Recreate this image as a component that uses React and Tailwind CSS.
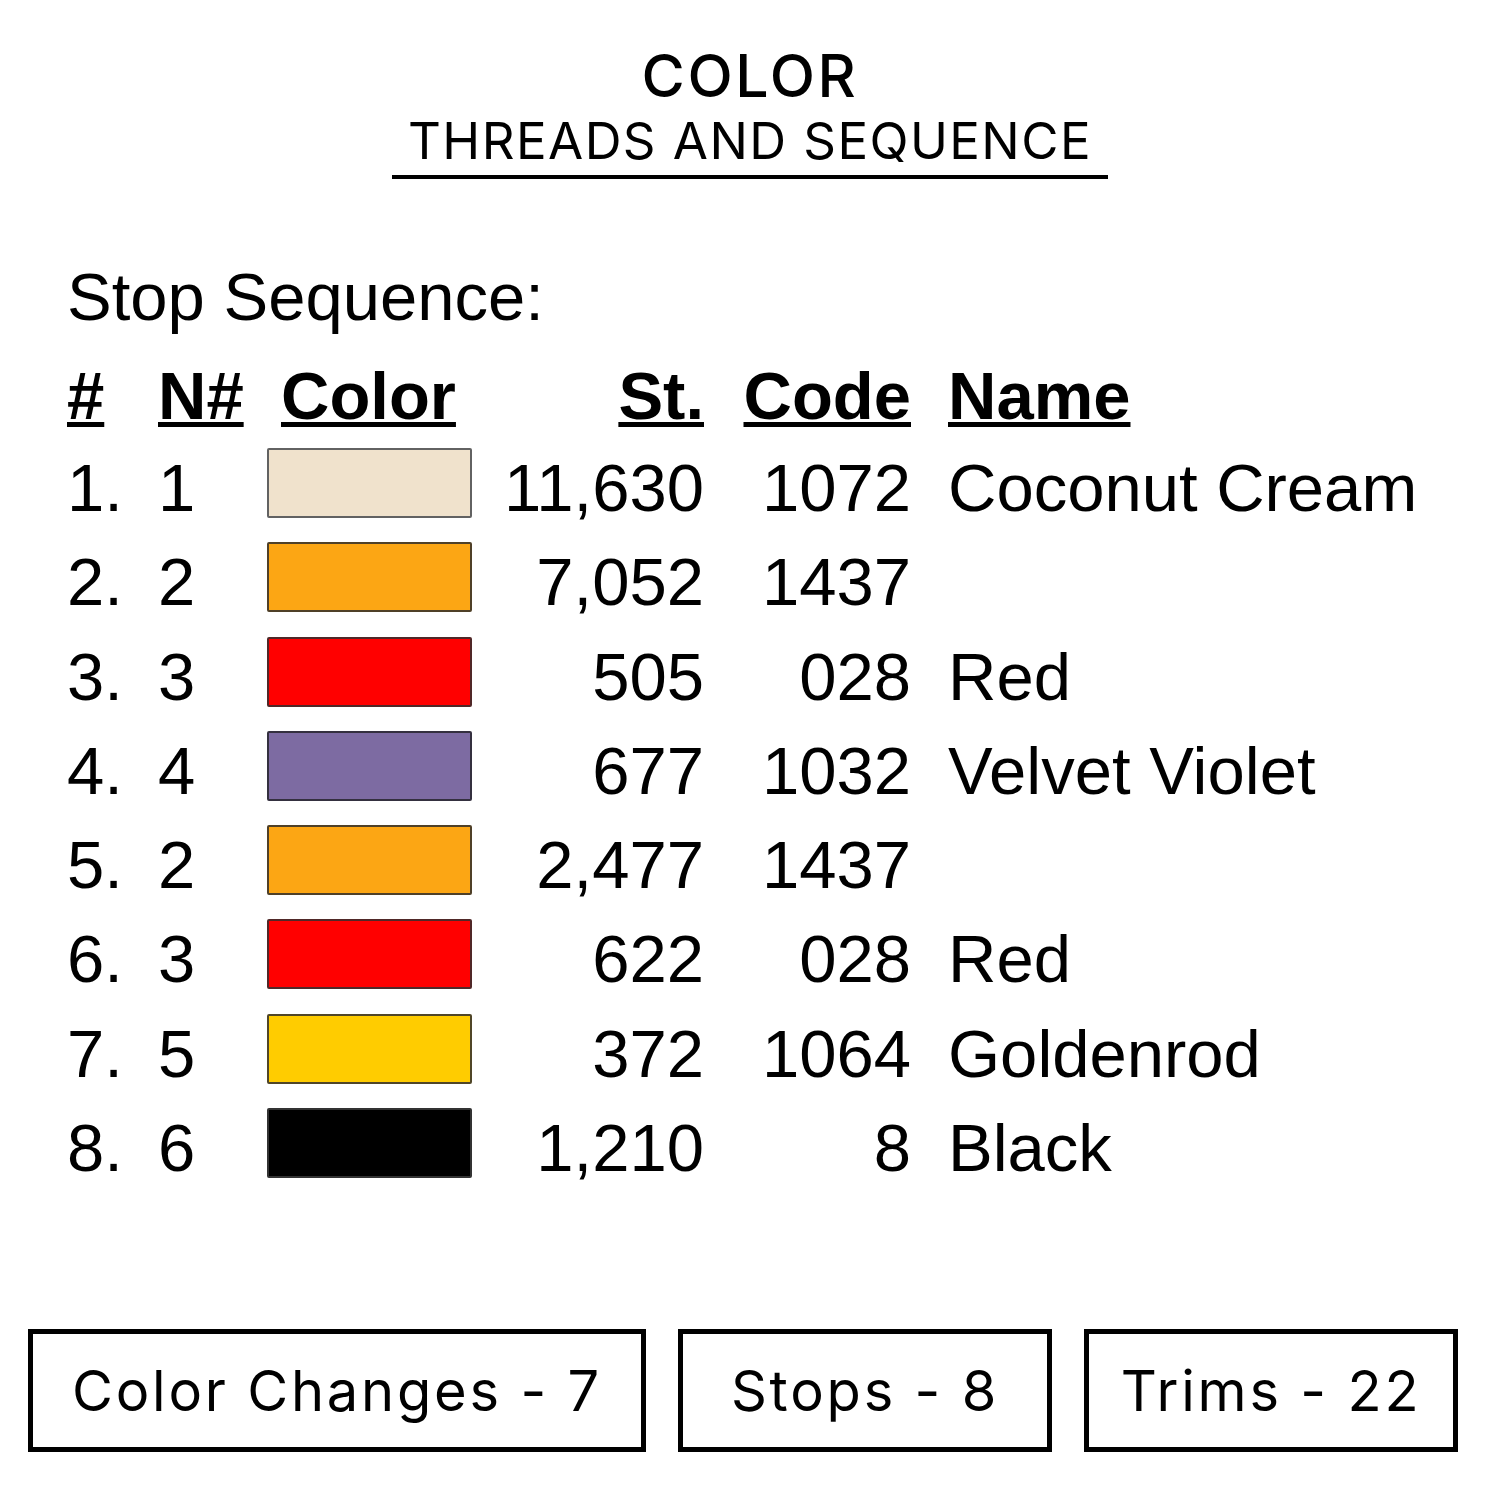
import React from 'react';

const rows = [
  { n: '1.', nn: '1', color: 'bg-[#f0e2cc]', border: 'border-[#626262]', st: '11,630', code: '1072', name: 'Coconut Cream' },
  { n: '2.', nn: '2', color: 'bg-[#fca614]', border: 'border-[#4f4028]', st: '7,052', code: '1437', name: '' },
  { n: '3.', nn: '3', color: 'bg-[#ff0000]', border: 'border-[#502828]', st: '505', code: '028', name: 'Red' },
  { n: '4.', nn: '4', color: 'bg-[#7d6ba2]', border: 'border-[#34303f]', st: '677', code: '1032', name: 'Velvet Violet' },
  { n: '5.', nn: '2', color: 'bg-[#fca614]', border: 'border-[#4f4028]', st: '2,477', code: '1437', name: '' },
  { n: '6.', nn: '3', color: 'bg-[#ff0000]', border: 'border-[#502828]', st: '622', code: '028', name: 'Red' },
  { n: '7.', nn: '5', color: 'bg-[#ffcc00]', border: 'border-[#504628]', st: '372', code: '1064', name: 'Goldenrod' },
  { n: '8.', nn: '6', color: 'bg-[#000000]', border: 'border-[#333333]', st: '1,210', code: '8', name: 'Black' },
];

const Header = () => (
  <div className="flex flex-col items-center pt-[44px]">
    <h1 className="font-['Inter',sans-serif] font-medium text-[59px] leading-[64px] tracking-[0.045em] text-black">
      COLOR
    </h1>
    <h2 className="font-['Inter',sans-serif] font-normal text-[51px] leading-[58px] tracking-[0.028em] text-black mt-[4px]">
      THREADS AND SEQUENCE
    </h2>
    <div className="w-[716px] h-[4px] bg-black mt-[5px]" />
  </div>
);

const StatBox = ({ label, className }) => (
  <div className={`h-[123px] border-[5px] border-black flex items-center justify-center ${className}`}>
    <span className="font-['Inter',sans-serif] text-[56px] leading-none tracking-[0.05em] text-black">{label}</span>
  </div>
);

export default function App() {
  return (
    <div className="w-[1500px] h-[1500px] bg-white relative flex flex-col">
      <Header />

      <div className="pl-[67px] mt-[85px] font-['Liberation_Sans',Arial,sans-serif] text-black text-[67px]">
        <p className="leading-[66px] h-[66px]">Stop Sequence:</p>

        <div className="mt-[19px] grid grid-cols-[91px_109px_204px_233px_207px_1fr] h-[92px] leading-[94px] font-bold">
          <span><span className="underline decoration-[5px]">#</span></span>
          <span><span className="underline decoration-[5px]">N#</span></span>
          <span className="pl-[14px]"><span className="underline decoration-[5px]">Color</span></span>
          <span className="text-right"><span className="underline decoration-[5px]">St.</span></span>
          <span className="text-right"><span className="underline decoration-[5px]">Code</span></span>
          <span className="pl-[37px]"><span className="underline decoration-[5px]">Name</span></span>
        </div>

        {rows.map((r, i) => (
          <div key={i} className="grid grid-cols-[91px_109px_204px_233px_207px_1fr] h-[94.3px] leading-[94px]">
            <span>{r.n}</span>
            <span>{r.nn}</span>
            <span className="pt-[7px]">
              <span className={`block w-[205px] h-[70px] border-[2.5px] rounded-[2px] ${r.border} ${r.color}`} />
            </span>
            <span className="text-right">{r.st}</span>
            <span className="text-right">{r.code}</span>
            <span className="pl-[37px] whitespace-nowrap">{r.name}</span>
          </div>
        ))}
      </div>

      <div className="absolute left-[28px] top-[1329px] flex gap-[32px]">
        <StatBox label="Color Changes - 7" className="w-[618px]" />
        <StatBox label="Stops - 8" className="w-[374px]" />
        <StatBox label="Trims - 22" className="w-[374px]" />
      </div>
    </div>
  );
}
